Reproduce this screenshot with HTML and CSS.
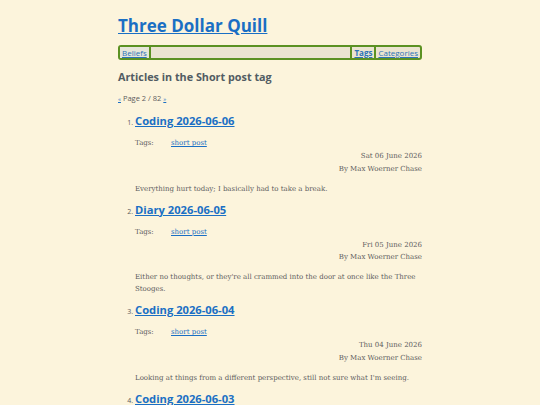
FILE: index.html
```html
<!DOCTYPE html>
<html>
<head>
<meta charset="utf-8">
<link rel="stylesheet" href="styles.css">
</head>
<body>
<div class="page">
  <header class="site-header">
    <a class="site-title" href="#">Three Dollar Quill</a>
    <nav class="nav">
      <a class="nav-link first" href="#">Beliefs</a>
      <span class="nav-fill"></span>
      <a class="nav-link sep current" href="#">Tags</a>
      <a class="nav-link sep" href="#">Categories</a>
    </nav>
  </header>
  <main>
    <h1 class="page-heading">Articles in the Short post tag</h1>
    <p class="pager"><a href="#">«</a> Page 2 / 82 <a href="#">»</a></p>
    <ol class="articles">
      <li class="article">
        <h2 class="article-title"><a href="#">Coding 2026-06-06</a></h2>
        <div class="tags"><span class="tags-label">Tags:</span><a href="#">short post</a></div>
        <div class="meta"><div>Sat 06 June 2026</div><div>By Max Woerner Chase</div></div>
        <p class="summary">Everything hurt today; I basically had to take a break.</p>
      </li>
      <li class="article">
        <h2 class="article-title"><a href="#">Diary 2026-06-05</a></h2>
        <div class="tags"><span class="tags-label">Tags:</span><a href="#">short post</a></div>
        <div class="meta"><div>Fri 05 June 2026</div><div>By Max Woerner Chase</div></div>
        <p class="summary">Either no thoughts, or they're all crammed into the door at once like the Three Stooges.</p>
      </li>
      <li class="article">
        <h2 class="article-title"><a href="#">Coding 2026-06-04</a></h2>
        <div class="tags"><span class="tags-label">Tags:</span><a href="#">short post</a></div>
        <div class="meta"><div>Thu 04 June 2026</div><div>By Max Woerner Chase</div></div>
        <p class="summary">Looking at things from a different perspective, still not sure what I'm seeing.</p>
      </li>
      <li class="article">
        <h2 class="article-title"><a href="#">Coding 2026-06-03</a></h2>
        <div class="tags"><span class="tags-label">Tags:</span><a href="#">short post</a></div>
        <div class="meta"><div>Wed 03 June 2026</div><div>By Max Woerner Chase</div></div>
        <p class="summary">More work.</p>
      </li>
    </ol>
  </main>
</div>
</body>
</html>
```
FILE: styles.css
```css
html, body {
  margin: 0;
  padding: 0;
  background: #fcf4dc;
}
body {
  font-family: "DejaVu Serif", serif;
  color: #5c5c5c;
  font-size: 7px;
}
a {
  color: #1a6fc4;
}
.page {
  width: 304px;
  margin: 0 auto;
  padding-top: 14px;
}
.site-title {
  display: inline-block;
  font-family: "Open Sans", sans-serif;
  font-weight: 700;
  font-size: 17px;
  line-height: 24px;
  color: #1a6fc4;
}
.nav {
  display: flex;
  margin-top: 7px;
  border: 2px solid #5b9122;
  border-radius: 3px;
  background: #ebe4d0;
  font-family: "Open Sans", sans-serif;
  font-size: 8px;
  line-height: 11px;
}
.nav-link {
  padding: 0 2px;
  color: #2d73b8;
}
.nav-link.first {
  background: #e6e6da;
  border-right: 2px solid #5b9122;
}
.nav-fill {
  flex: 1;
}
.nav-link.sep {
  border-left: 2px solid #5b9122;
}
.nav-link.current {
  font-weight: 700;
}
.page-heading {
  font-family: "Open Sans", sans-serif;
  font-weight: 700;
  font-size: 10.8px;
  color: #525c63;
  margin: 8px 0 0;
  line-height: 18px;
}
.pager {
  font-family: "Open Sans", sans-serif;
  font-size: 7.5px;
  margin: 6px 0 0;
  line-height: 12px;
}
.pager a {
  font-size: 6px;
}
.articles {
  margin: 7px 0 0;
  padding-left: 17px;
}
.article {
  font-size: 7px;
  font-family: "Open Sans", sans-serif;
}
.article-title {
  font-family: "Open Sans", sans-serif;
  font-weight: 700;
  font-size: 11.2px;
  margin: 0;
  line-height: 18px;
  display: inline;
}
.tags, .meta, .summary {
  font-family: "DejaVu Serif", serif;
  font-size: 7px;
}
.tags {
  margin-top: 7px;
  line-height: 12px;
  display: flex;
}
.tags-label {
  width: 36px;
}
.meta {
  margin-top: 1px;
  text-align: right;
  line-height: 12px;
}
.meta div + div {
  margin-top: 0.5px;
}
.summary {
  margin: 8px 0 6px;
  line-height: 12px;
}
```
